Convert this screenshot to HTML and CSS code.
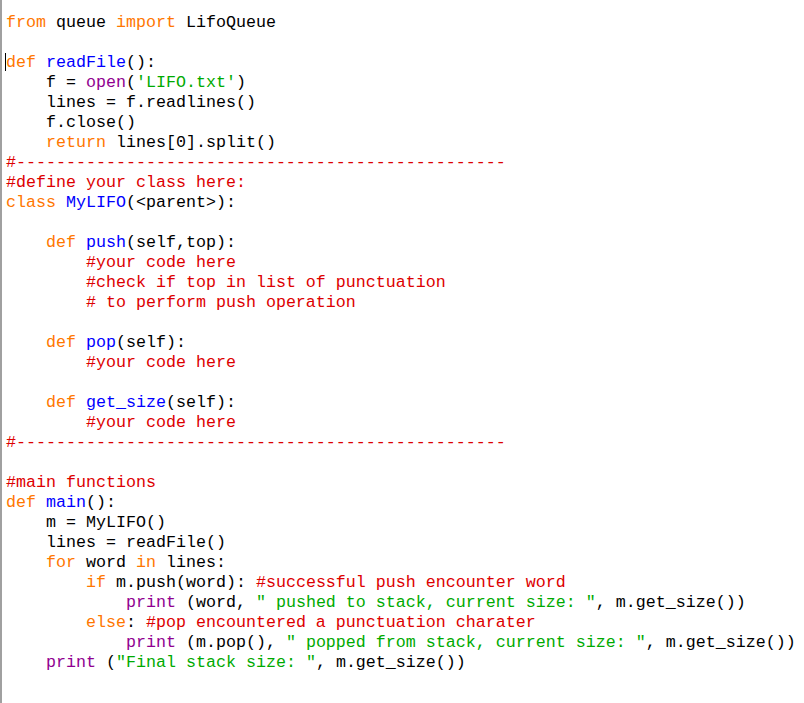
FILE: index.html
```html
<!DOCTYPE html>
<html>
<head>
<meta charset="utf-8">
<link rel="stylesheet" href="styles.css">
</head>
<body>
<div class="editor">
<div class="code">
<div class="ln"><span class="kw">from</span> queue <span class="kw">import</span> LifoQueue</div>
<div class="ln"> </div>
<div class="ln"><span class="cursor"></span><span class="kw">def</span> <span class="def">readFile</span>():</div>
<div class="ln">    f = <span class="bi">open</span>(<span class="str">'LIFO.txt'</span>)</div>
<div class="ln">    lines = f.readlines()</div>
<div class="ln">    f.close()</div>
<div class="ln">    <span class="kw">return</span> lines[0].split()</div>
<div class="ln"><span class="cm">#-------------------------------------------------</span></div>
<div class="ln"><span class="cm">#define your class here:</span></div>
<div class="ln"><span class="kw">class</span> <span class="def">MyLIFO</span>(&lt;parent&gt;):</div>
<div class="ln"> </div>
<div class="ln">    <span class="kw">def</span> <span class="def">push</span>(self,top):</div>
<div class="ln">        <span class="cm">#your code here</span></div>
<div class="ln">        <span class="cm">#check if top in list of punctuation</span></div>
<div class="ln">        <span class="cm"># to perform push operation</span></div>
<div class="ln"> </div>
<div class="ln">    <span class="kw">def</span> <span class="def">pop</span>(self):</div>
<div class="ln">        <span class="cm">#your code here</span></div>
<div class="ln"> </div>
<div class="ln">    <span class="kw">def</span> <span class="def">get_size</span>(self):</div>
<div class="ln">        <span class="cm">#your code here</span></div>
<div class="ln"><span class="cm">#-------------------------------------------------</span></div>
<div class="ln"> </div>
<div class="ln"><span class="cm">#main functions</span></div>
<div class="ln"><span class="kw">def</span> <span class="def">main</span>():</div>
<div class="ln">    m = MyLIFO()</div>
<div class="ln">    lines = readFile()</div>
<div class="ln">    <span class="kw">for</span> word <span class="kw">in</span> lines:</div>
<div class="ln">        <span class="kw">if</span> m.push(word): <span class="cm">#successful push encounter word</span></div>
<div class="ln">            <span class="bi">print</span> (word, <span class="str">" pushed to stack, current size: "</span>, m.get_size())</div>
<div class="ln">        <span class="kw">else</span>: <span class="cm">#pop encountered a punctuation charater</span></div>
<div class="ln">            <span class="bi">print</span> (m.pop(), <span class="str">" popped from stack, current size: "</span>, m.get_size())</div>
<div class="ln">    <span class="bi">print</span> (<span class="str">"Final stack size: "</span>, m.get_size())</div>
</div>
</div>
</body>
</html>
```
FILE: styles.css
```css
html, body {
  margin: 0;
  padding: 0;
  background: #ffffff;
}
.editor {
  box-sizing: border-box;
  width: 804px;
  height: 703px;
  border-left: 2px solid #a0a0a0;
  overflow: hidden;
  background: #ffffff;
}
.code {
  padding: 13px 0 0 4px;
  font-family: "Liberation Mono", "Courier New", monospace;
  font-size: 16.667px;
  line-height: 20px;
  color: #000000;
}
.ln {
  height: 20px;
  white-space: pre;
}
.kw { color: #ff7700; }
.def { color: #0000ff; }
.bi { color: #900090; }
.str { color: #00aa00; }
.cm { color: #dd0000; }
.cursor {
  display: inline-block;
  width: 0;
  height: 18px;
  border-left: 1px solid #000000;
  margin-left: -1px;
  vertical-align: -4px;
}
```
